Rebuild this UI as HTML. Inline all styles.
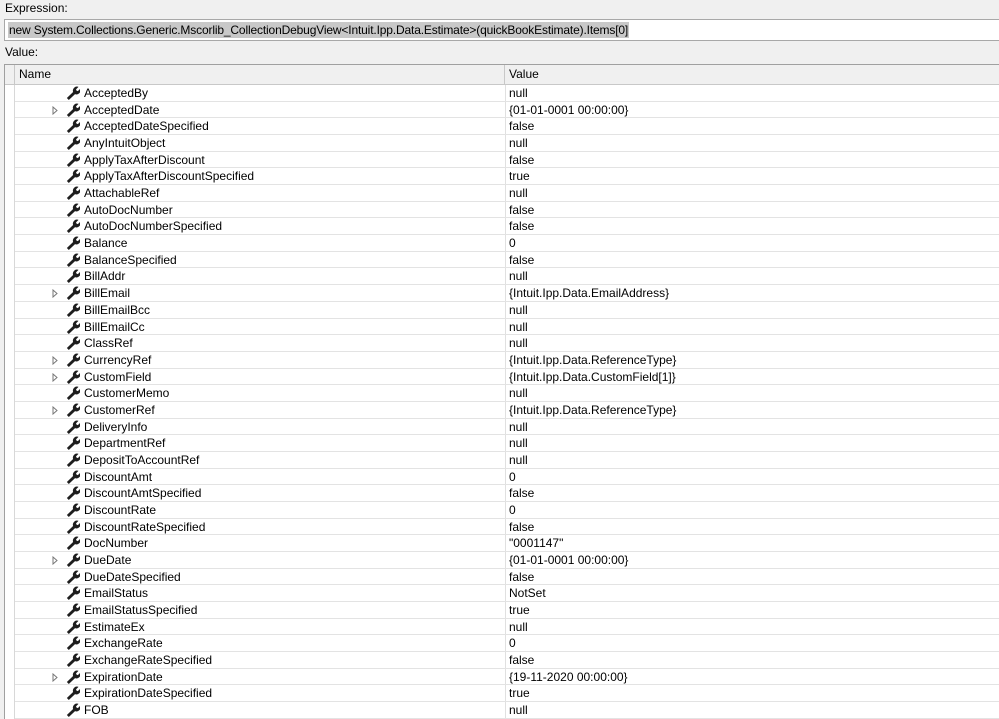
<!DOCTYPE html>
<html style="overflow:hidden;height:719px"><head><style>
body{margin:0;width:999px;height:719px;background:#f0f0f0;font-family:"Liberation Sans",sans-serif;font-size:12px;color:#000;position:relative;overflow:hidden}
.lbl{position:absolute;left:5px}
#box{position:absolute;left:4px;top:19px;width:995px;height:22px;border:1px solid #a8a8a8;border-right:none;background:#fff;box-sizing:border-box}
#box span{position:absolute;left:3px;top:2px;background:#c8c8c8;line-height:16px;padding:0 1px;letter-spacing:-0.15px}
#tbl{position:absolute;left:4px;top:64px;width:995px;height:655px;border:1px solid #a0a0a0;border-right:none;border-bottom:none;background:#fff;box-sizing:border-box;overflow:hidden}
#hdr{position:absolute;left:0;top:0;width:1000px;height:20px;background:#f0f0f0;border-bottom:1px solid #c8c8c8;box-sizing:border-box}
#hdr div{position:absolute;top:0;height:19px;line-height:19px;border-right:1px solid #c8c8c8}
#gut{position:absolute;left:9px;top:20px;width:1px;height:640px;background:#d8d8d8}
#vl{position:absolute;left:500px;top:20px;width:1px;height:640px;background:#e0e0e0}
.r{position:absolute;left:10px;width:990px;height:16.68px;border-bottom:1px solid #e3e3e3;box-sizing:border-box}
.r .n{position:absolute;left:69px;top:1px;line-height:15px}
.r .v{position:absolute;left:494px;top:1px;line-height:15px}
.r svg.w{position:absolute;left:51px;top:1px}
.r svg.a{position:absolute;left:37px;top:4px}
</style></head><body>
<div class="lbl" style="top:1px">Expression:</div>
<div id="box"><span>new System.Collections.Generic.Mscorlib_CollectionDebugView&lt;Intuit.Ipp.Data.Estimate&gt;(quickBookEstimate).Items[0]</span></div>
<div class="lbl" style="top:45px">Value:</div>
<div id="tbl">
<div id="hdr"><div style="left:0;width:9px"></div><div style="left:10px;width:490px;padding-left:4px;box-sizing:border-box">Name</div><div style="left:501px;width:499px;padding-left:3px;border:none">Value</div></div>
<div id="gut"></div><div id="vl"></div>
<div id="rows"></div>
</div>
<script>
var d=[["AcceptedBy","null",0],["AcceptedDate","{01-01-0001 00:00:00}",1],["AcceptedDateSpecified","false",0],["AnyIntuitObject","null",0],["ApplyTaxAfterDiscount","false",0],["ApplyTaxAfterDiscountSpecified","true",0],["AttachableRef","null",0],["AutoDocNumber","false",0],["AutoDocNumberSpecified","false",0],["Balance","0",0],["BalanceSpecified","false",0],["BillAddr","null",0],["BillEmail","{Intuit.Ipp.Data.EmailAddress}",1],["BillEmailBcc","null",0],["BillEmailCc","null",0],["ClassRef","null",0],["CurrencyRef","{Intuit.Ipp.Data.ReferenceType}",1],["CustomField","{Intuit.Ipp.Data.CustomField[1]}",1],["CustomerMemo","null",0],["CustomerRef","{Intuit.Ipp.Data.ReferenceType}",1],["DeliveryInfo","null",0],["DepartmentRef","null",0],["DepositToAccountRef","null",0],["DiscountAmt","0",0],["DiscountAmtSpecified","false",0],["DiscountRate","0",0],["DiscountRateSpecified","false",0],["DocNumber","\"0001147\"",0],["DueDate","{01-01-0001 00:00:00}",1],["DueDateSpecified","false",0],["EmailStatus","NotSet",0],["EmailStatusSpecified","true",0],["EstimateEx","null",0],["ExchangeRate","0",0],["ExchangeRateSpecified","false",0],["ExpirationDate","{19-11-2020 00:00:00}",1],["ExpirationDateSpecified","true",0],["FOB","null",0]];
var w='<svg class="w" width="14" height="14" viewBox="0 0 13 13"><path d="M0.8 11.2 L6.6 5.6 A3.8 3.8 0 0 1 11.6 0.8 L9.3 3.1 L9.8 4.3 L11 4.8 L13.2 2.6 A3.8 3.8 0 0 1 8.4 7.6 L2.6 13 Z" fill="#1e1e1e"/></svg>';
var a='<svg class="a" width="6" height="9" viewBox="0 0 6 9"><path d="M1 1 L5 4.5 L1 8 Z" fill="none" stroke="#777" stroke-width="1"/></svg>';
var h='';
d.forEach(function(r,i){h+='<div class="r" style="top:'+(20+i*16.68)+'px">'+(r[2]?a:'')+w+'<div class="n">'+r[0]+'</div><div class="v">'+r[1]+'</div></div>';});
document.getElementById('rows').innerHTML=h;
</script>
</body></html>
